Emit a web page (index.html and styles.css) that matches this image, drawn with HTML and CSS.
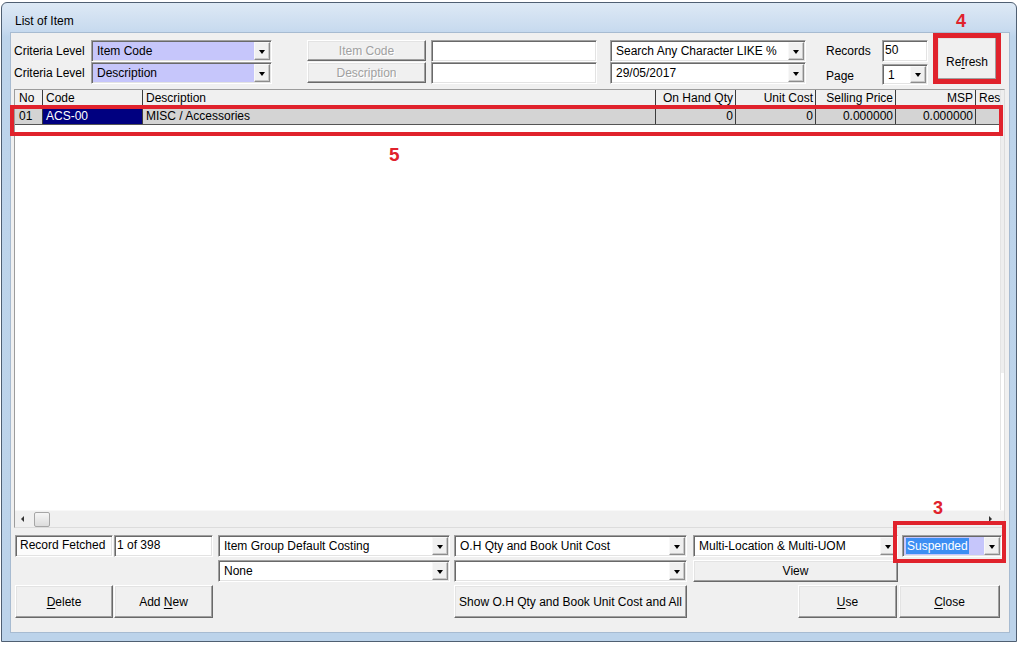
FILE: index.html
```html
<!DOCTYPE html>
<html>
<head>
<meta charset="utf-8">
<title>List of Item</title>
<link rel="stylesheet" href="styles.css">
</head>
<body>
<div class="window">
  <div class="titlebar">List of Item</div>
  <div class="client">
    <div class="top">
      <div class="col labels">
        <div class="lbl">Criteria Level</div>
        <div class="lbl">Criteria Level</div>
      </div>
      <div class="col c-crit">
        <div class="combo purple"><span class="val">Item Code</span><span class="dd"></span></div>
        <div class="combo purple"><span class="val">Description</span><span class="dd"></span></div>
      </div>
      <div class="col c-btns">
        <div class="btn disabled small"><span>Item Code</span></div>
        <div class="btn disabled small"><span>Description</span></div>
      </div>
      <div class="col c-inputs">
        <div class="input"></div>
        <div class="input"></div>
      </div>
      <div class="col c-search">
        <div class="combo"><span class="val">Search Any Character LIKE %</span><span class="dd"></span></div>
        <div class="combo"><span class="val">29/05/2017</span><span class="dd"></span></div>
      </div>
      <div class="col c-rlabels">
        <div class="lbl">Records</div>
        <div class="lbl page">Page</div>
      </div>
      <div class="col c-rvals">
        <div class="input tight">50</div>
        <div class="combo short"><span class="val">1</span><span class="dd"></span></div>
      </div>
      <div class="refresh-wrap">
        <div class="btn refresh"><span>Re<u>f</u>resh</span></div>
        <div class="mark mark-box"></div>
        <div class="mark-num num4">4</div>
      </div>
    </div>

    <div class="grid">
      <div class="gmain">
        <div class="gbody">
          <div class="rows">
            <div class="row head">
              <div class="cell c-no">No</div>
              <div class="cell c-code">Code</div>
              <div class="cell c-desc">Description</div>
              <div class="cell c-num">On Hand Qty</div>
              <div class="cell c-num">Unit Cost</div>
              <div class="cell c-num">Selling Price</div>
              <div class="cell c-num">MSP</div>
              <div class="cell c-res">Res</div>
            </div>
            <div class="row data">
              <div class="cell c-no">01</div>
              <div class="cell c-code sel">ACS-00</div>
              <div class="cell c-desc">MISC / Accessories</div>
              <div class="cell c-num">0</div>
              <div class="cell c-num">0</div>
              <div class="cell c-num">0.000000</div>
              <div class="cell c-num">0.000000</div>
              <div class="cell c-res"></div>
            </div>
          </div>
          <div class="vstrip"></div>
        </div>
        <div class="hscroll">
          <span class="arrow-left"></span>
          <span class="thumb"></span>
          <span class="spacer"></span>
          <span class="arrow-right"></span>
        </div>
      </div>
      <div class="mark box5"></div>
      <div class="mark-num num5">5</div>
    </div>

    <div class="bottom">
      <div class="input field rf">Record Fetched</div>
      <div class="input field cnt">1 of 398</div>
      <div class="combo b-c1 r1"><span class="val">Item Group Default Costing</span><span class="dd"></span></div>
      <div class="combo b-c2 r1"><span class="val">O.H Qty and Book Unit Cost</span><span class="dd"></span></div>
      <div class="combo b-c3 r1"><span class="val">Multi-Location &amp; Multi-UOM</span><span class="dd"></span></div>
      <div class="combo purple b-c4 r1 susp">
        <span class="val"><span class="hl">Suspended</span></span><span class="dd"></span>
        <div class="mark box3"></div>
        <div class="mark-num num3">3</div>
      </div>

      <div class="combo b-c1 r2"><span class="val">None</span><span class="dd"></span></div>
      <div class="combo b-c2 r2"><span class="val"></span><span class="dd"></span></div>
      <div class="btn b-c3 r2"><span>View</span></div>

      <div class="btn big b-a r3"><span><u>D</u>elete</span></div>
      <div class="btn big b-b r3"><span>Add <u>N</u>ew</span></div>
      <div class="btn big b-c2 r3"><span>Show O.H Qty and Book Unit Cost and All</span></div>
      <div class="btn big b-c3 r3 use"><span><u>U</u>se</span></div>
      <div class="btn big b-c4 r3 close"><span><u>C</u>lose</span></div>
    </div>
  </div>
</div>
</body>
</html>
```

FILE: styles.css
```css
* { box-sizing: border-box; }
html, body { margin: 0; padding: 0; background: #ffffff; }
body {
  font-family: "Liberation Sans", Arial, sans-serif;
  font-size: 12px;
  color: #000;
}

.window {
  margin: 2px 0 0 1px;
  width: 1016px;
  height: 640px;
  border: 1px solid #4f5f72;
  border-radius: 6px 6px 0 0;
  background: linear-gradient(#dde9f5 0px, #c9dbef 26px, #bdd4eb 34px, #bcd3ea 100%);
  padding: 0 6px 8px 8px;
  display: flex;
  flex-direction: column;
}
.titlebar {
  height: 29px;
  padding: 11px 0 0 5px;
  line-height: 14px;
  color: #000;
}
.client {
  flex: 1;
  background: #f0f0f0;
  border: 1px solid #a7bbd1;
  display: flex;
  flex-direction: column;
}

/* ---------- top panel ---------- */
.top {
  display: flex;
  align-items: flex-start;
  height: 44px;
  margin: 7px 0 0 3px;
}
.col { display: flex; flex-direction: column; }
.labels { width: 77px; }
.lbl { height: 22px; line-height: 22px; white-space: nowrap; }
.c-crit { width: 181px; }
.c-btns { width: 119px; margin-left: 35px; gap: 1px; }
.c-inputs { width: 166px; margin-left: 5px; }
.c-search { width: 196px; margin-left: 13px; }
.c-rlabels { width: 56px; margin-left: 20px; }
.c-rlabels .page { margin-top: 2px; height: 24px; line-height: 24px; }
.c-rvals { width: 46px; gap: 2px; }

/* sunken field */
.input {
  height: 22px;
  background: #fff;
  border: 1px solid;
  border-color: #a0a0a0 #ffffff #ffffff #a0a0a0;
  box-shadow: inset 1px 1px 0 #696969, inset -1px -1px 0 #e3e3e3;
  padding: 0 0 0 3px;
  line-height: 19px;
  white-space: nowrap;
  overflow: hidden;
}
.input.tight { padding-left: 2px; line-height: 18px; }

/* combo */
.combo {
  height: 22px;
  display: flex;
  align-items: stretch;
  background: #fff;
  border: 1px solid;
  border-color: #a0a0a0 #ffffff #ffffff #a0a0a0;
  box-shadow: inset 1px 1px 0 #696969, inset -1px -1px 0 #e3e3e3;
  padding: 1px;
}
.combo.purple { background: #c6c6fb; }
.combo.short { height: 21px; }
.combo .val {
  flex: 1;
  padding-left: 4px;
  line-height: 18px;
  white-space: nowrap;
  overflow: hidden;
}
.combo .dd {
  width: 16px;
  flex: none;
  background: #f0f0f0;
  border: 1px solid;
  border-color: #f8f8f8 #8c8c8c #8c8c8c #f8f8f8;
  box-shadow: inset -1px -1px 0 #c8c8c8;
  display: flex;
  align-items: center;
  justify-content: center;
}
.combo .dd::after {
  content: "";
  width: 0;
  height: 0;
  border-style: solid;
  border-width: 4px 3.5px 0 3.5px;
  border-color: #000 transparent transparent transparent;
  margin-top: 1px;
}

/* raised button */
.btn {
  background: #f0f0f0;
  border: 1px solid;
  border-color: #ffffff #696969 #696969 #ffffff;
  box-shadow: inset -1px -1px 0 #a0a0a0, inset 1px 1px 0 #e3e3e3;
  display: flex;
  align-items: center;
  justify-content: center;
  white-space: nowrap;
}
.btn.small { height: 21px; }
.btn.disabled { color: #a0a0a0; text-shadow: 1px 1px 0 #ffffff; }
.btn u { text-decoration: underline; text-underline-offset: 2px; }

.refresh-wrap {
  position: relative;
  margin: -3px 0 0 9px;
}
.btn.refresh {
  width: 60px;
  height: 43px;
  padding-top: 6px;
}

/* annotations */
.mark {
  position: absolute;
  border: 4px solid #e0222c;
  pointer-events: none;
}
.mark-box { left: -4px; top: -4px; width: 68px; height: 51px; border-width: 5px; }
.mark-num {
  position: absolute;
  color: #e0222c;
  font-weight: bold;
  font-size: 18px;
  line-height: 18px;
}
.num4 { left: 19px; top: -25px; }

/* ---------- grid ---------- */
.grid {
  position: relative;
  margin: 5px 0 0 3px;
  width: 991px;
  height: 439px;
  border: 1px solid;
  border-color: #9c9c9c #dcdcdc #dcdcdc #9c9c9c;
  background: #fff;
}
.gmain { display: flex; flex-direction: column; height: 100%; }
.gbody { flex: 1; display: flex; }
.rows { width: 985px; overflow: hidden; }
.vstrip {
  flex: 1;
  background: linear-gradient(#eeeeee 0, #eeeeee 283px, #ffffff 283px);
  border-left: 1px solid #e4e4e4;
}
.row { display: flex; white-space: nowrap; }
.row.head { height: 17px; background: #f0f0f0; border-bottom: 1px solid #555; }
.row.data { height: 18px; background: #d4d4d4; border-bottom: 1px solid #555; }
.cell {
  border-right: 1px solid #3c3c3c;
  overflow: hidden;
  line-height: 17px;
  flex: none;
}
.row.data .cell { line-height: 19px; }
.c-no { width: 28px; padding-left: 4px; }
.c-code { width: 100px; padding-left: 3px; }
.c-desc { width: 513px; padding-left: 3px; }
.c-num { width: 80px; text-align: right; padding-right: 2px; }
.c-res { flex: 1; padding-left: 3px; border-right: none; }
.cell.sel { background: #000080; color: #fff; }

.hscroll {
  height: 17px;
  display: flex;
  align-items: center;
  background: #f0f0f0;
  border-top: 1px solid #f8f8f8;
}
.arrow-left {
  margin-left: 6px;
  width: 0; height: 0;
  border-style: solid;
  border-width: 3px 3px 3px 0;
  border-color: transparent #333 transparent transparent;
}
.thumb {
  margin-left: 10px;
  width: 16px;
  height: 15px;
  border: 1px solid #a6a6a6;
  border-radius: 2px;
  background: linear-gradient(#f6f6f6, #dcdcdc);
}
.spacer { flex: 1; }
.arrow-right {
  margin-right: 12px;
  width: 0; height: 0;
  border-style: solid;
  border-width: 3px 0 3px 3px;
  border-color: transparent transparent transparent #333;
}
.box5 { left: -5px; top: 15px; width: 993px; height: 31px; }
.num5 { left: 374px; top: 56px; font-size: 19px; }

/* ---------- bottom ---------- */
.bottom {
  display: grid;
  grid-template-columns: 98px 1px 99px 5px 232px 4px 233px 6px 205px 4px 100px;
  grid-template-rows: 22px 22px 33px;
  row-gap: 3px;
  margin: 7px 0 0 4px;
}
.r1 { grid-row: 1; }
.r2 { grid-row: 2; }
.r3 { grid-row: 3; }
.rf { grid-column: 1; grid-row: 1; padding-left: 4px; background: #fcfcfc; }
.cnt { grid-column: 3; grid-row: 1; padding-left: 2px; }
.b-a { grid-column: 1; }
.b-b { grid-column: 3; }
.b-c1 { grid-column: 5; }
.b-c2 { grid-column: 7; }
.b-c3 { grid-column: 9; }
.b-c4 { grid-column: 11; }
.btn.use { width: 99px; justify-self: end; margin-right: 1px; }
.btn.close { margin-left: -3px; width: 101px; }

.susp { position: relative; }
.susp .val { padding-left: 2px; display: flex; align-items: center; }
.hl {
  background: #3d8ef3;
  color: #fff;
  line-height: 16px;
  padding: 0 1px;
}
.box3 { left: -10px; top: -15px; width: 113px; height: 42px; }
.num3 { left: 30px; top: -37px; }
```
